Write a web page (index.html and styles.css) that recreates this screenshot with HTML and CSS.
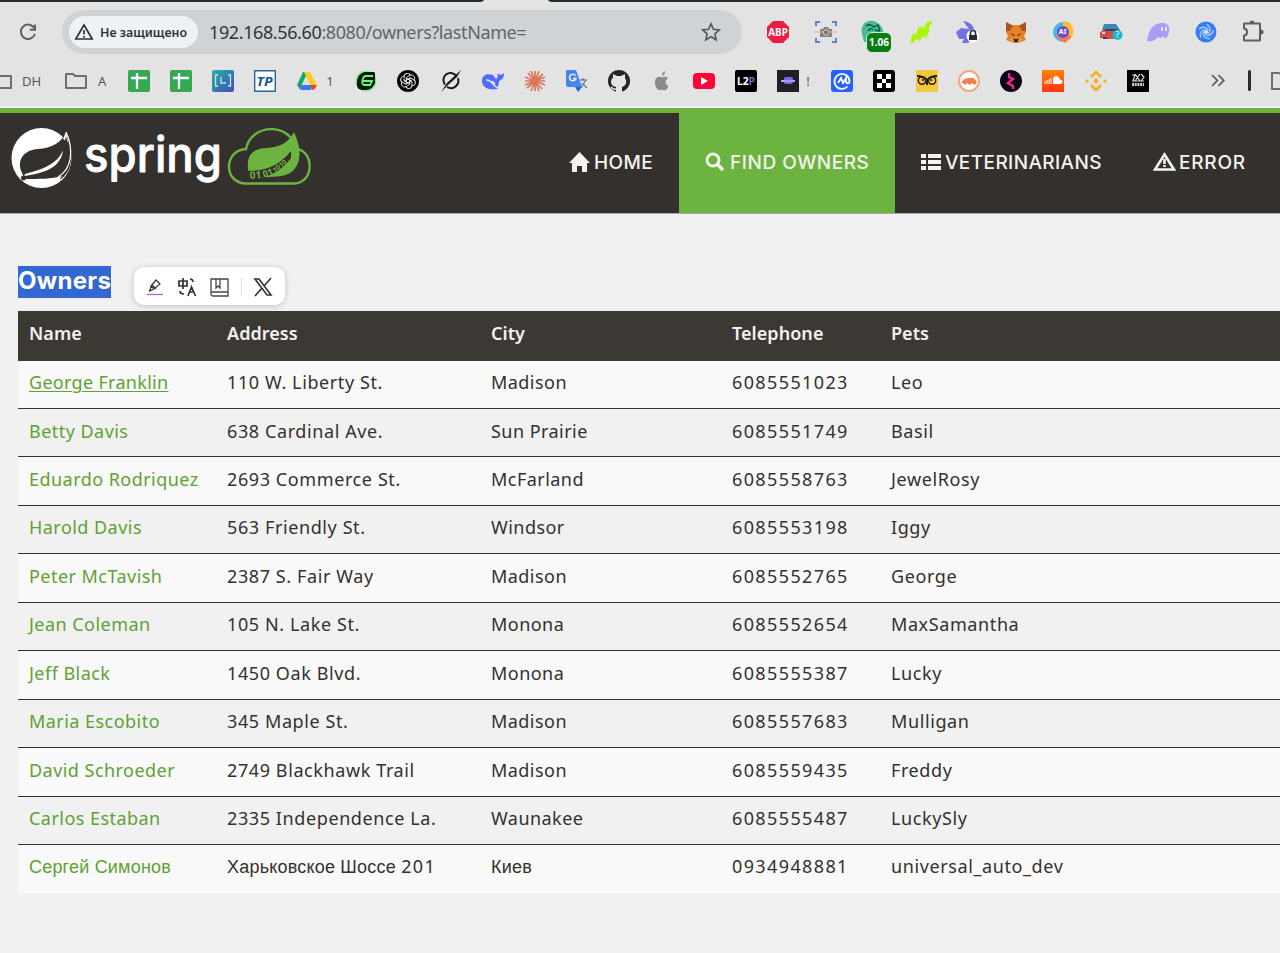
FILE: index.html
```html
<!DOCTYPE html>
<html lang="en">
<head>
<meta charset="utf-8">
<title>Owners</title>
<link rel="stylesheet" href="styles.css">
</head>
<body>
<header class="browser">
  <div class="tabstrip"><span class="tab-left"></span><span class="tab-right"></span></div>
  <div class="toolbar">
    <svg class="reload" viewBox="0 0 20 20"><path d="M16.4 6.2A7.2 7.2 0 1 0 17 12M17 2.5v5.2h-5.2" fill="none" stroke="#606264" stroke-width="2"/></svg>
    <div class="omnibox">
      <div class="security">
        <svg width="20" height="18" viewBox="0 0 20 18"><path d="M10 2 1.8 16h16.4z" fill="none" stroke="#303438" stroke-width="1.7"/><path d="M10 7v4.5M10 13v1.7" stroke="#303438" stroke-width="1.7"/></svg>
        <span>Не защищено</span>
      </div>
      <div class="url">192.168.56.60<span>:8080/owners?lastName=</span></div>
      <svg class="star" viewBox="0 0 20 20"><path d="m10 1.8 2.4 5.5 6 .6-4.5 4 1.3 5.900-5.200-3.100-5.200 3.100 1.300-5.900-4.500-4 6-.6z" fill="none" stroke="#54575a" stroke-width="1.6"/></svg>
    </div>
    <div class="extensions">
      <svg viewBox="0 0 24 24"><path d="M7 1h10l6 6v10l-6 6H7l-6-6V7z" fill="#ed1c43"/><text x="2.2" y="16.2" font-size="11" font-weight="700" textLength="19.6" lengthAdjust="spacingAndGlyphs" fill="#fff">ABP</text></svg>
      <svg viewBox="0 0 24 24"><path d="M2 6V2h4M18 2h4v4M22 18v4h-4M6 22H2v-4" fill="none" stroke="#5d84cf" stroke-width="2"/><path d="M6 9h3l1-2h4l1 2h3v8H6z" fill="#85827f"/><path d="M1 12h22" stroke="#e8b09f"/><circle cx="12" cy="12.500" r="2.700" fill="#777" stroke="#ccc"/></svg>
      <div class="badged"><svg viewBox="0 0 24 24"><path d="M1 14C-1 5 5 0 12 1c6 1 10 6 11 14l-7 7H3z" fill="#43bd8f"/><path d="M5 6q4-3 8 1l4-2 2 5M7 11q3-4 5-1M14 10l5 1" fill="none" stroke="#174b40" stroke-width="1.300"/></svg><span class="badge">1.06</span></div>
      <svg viewBox="0 0 24 24"><path d="m1 23 2-8 3-2 1 2 2-7 4-2 1 3 4-7 4-1 1 2-3 4v5l-3 6-3-2-3 5-4-2-3 4z" fill="#a9f50b"/></svg>
      <svg viewBox="0 0 24 24"><path d="M7 1c7 1 10 4 11 8l4 5-7 6-3 3-6 0 2-4H3l-3-7 5-4 8 1z" fill="#7470e5"/><circle cx="17" cy="16" r="6.500" fill="#fff"/><path d="M13 15h8v5h-8z" fill="#262b35"/><path d="M14.500 15v-2a2.500 2.500 0 0 1 5 0v2" fill="none" stroke="#262b35" stroke-width="1.600"/></svg>
      <svg viewBox="0 0 24 24"><path d="m2 2 6 3h8l6-3v10l-2 4 2 4-5 2-3 1h-4l-3-1-5-2 2-4-2-4z" fill="#e88120"/><path d="m2 2 7 4-3 5H2zm20 0-7 4 3 5h4z" fill="#a75227"/><path d="m6 13 5 2-1 1zm12 0-5 2 1 1zM9 19h6l-1 3h-4z" fill="#38261d"/><path d="m6 18 4 2-1 2zm12 0-4 2 1 2z" fill="#d3beac"/></svg>
      <svg viewBox="0 0 24 24"><circle cx="12" cy="12" r="10" fill="#43b8ee"/><path d="M12 1c10-1 13 12 8 17l-5 5-3-8z" fill="#ffbd31"/><path d="M5 17 13 8l7 9-6 6z" fill="#ff7850"/><circle cx="12" cy="12" r="6" fill="#7247c7"/><text x="7.8" y="14.400" font-size="7" font-weight="700" fill="#fff">AI</text></svg>
      <svg viewBox="0 0 24 24"><path d="m3 11 2-2h14l3 3v7H4v-1H1v-6z" fill="#d44d49"/><path d="m3 10 2-6h12l4 6z" fill="#358ab9"/><path d="M6 10h13M4 18h4" stroke="#3c4058" stroke-width="2"/><path d="M3 13h3" stroke="#ffd4bd" stroke-width="2"/><circle cx="18.500" cy="15" r="5" fill="#16b9c9"/><text x="16.600" y="18" font-size="8" fill="#fff">?</text></svg>
      <svg viewBox="0 0 24 24"><path d="M1 21C3 8 9 2 17 3c8 1 7 9 4 14-2 2-3 1-4-1-2 3-4 3-5 0-2 4-5 6-11 5z" fill="#ab9df1"/><path d="M16 7v4M20 7v4" stroke="#e8e4ff" stroke-width="2"/></svg>
      <svg viewBox="0 0 24 24"><circle cx="12" cy="12" r="10.500" fill="#3a7df1"/><g fill="none" stroke="#a9ceff" stroke-width="1.300"><path id="swirl" d="M14 11c0-4-6-5-9-2"/><use href="#swirl" transform="rotate(72 12 12)"/><use href="#swirl" transform="rotate(144 12 12)"/><use href="#swirl" transform="rotate(216 12 12)"/><use href="#swirl" transform="rotate(288 12 12)"/></g><circle cx="12" cy="12" r="2" fill="#d7e8ff"/></svg>
      <svg class="puzzle" viewBox="0 0 24 24"><path d="M3 3.500h16V20.500H3v-5c4 0 4-7 0-7z" fill="none" stroke="#5d5f61" stroke-width="2" stroke-linejoin="round"/><path d="M8.500 3a2.500 2.500 0 0 1 5 0zM20 9.500a2.500 2.500 0 0 1 0 5z" fill="#5d5f61"/></svg>
    </div>
  </div>
  <nav class="bookmarks">
    <svg class="folder-cut" viewBox="0 0 24 24"><path d="M1 5h8l2 2h12v12H1z" fill="none" stroke="#6c6e70" stroke-width="2" stroke-linejoin="round"/></svg><span class="dh">DH</span>
    <svg class="folder" viewBox="0 0 24 24"><path d="M2 5h7l2 2h11v12H2z" fill="none" stroke="#6c6e70" stroke-width="2" stroke-linejoin="round"/></svg><span class="a">A</span>
    <div class="group first">
      <svg viewBox="0 0 24 24"><rect x="1" y="1" width="22" height="22" rx="2" fill="#34a853"/><path d="M4 9h16M10 4v16" stroke="#fff" stroke-width="2.300"/></svg>
      <svg viewBox="0 0 24 24"><rect x="1" y="1" width="22" height="22" rx="2" fill="#34a853"/><path d="M4 9h16M10 4v16" stroke="#fff" stroke-width="2.300"/></svg>
      <svg viewBox="0 0 24 24"><defs><linearGradient id="lms" x2="1" y2="1"><stop stop-color="#27b3a4"/><stop offset="1" stop-color="#4849ba"/></linearGradient></defs><rect x="1" y="1" width="22" height="22" rx="2" fill="url(#lms)"/><path d="M7 6H4.500v11H7M17 6h2.500v11H17M10 8v6h5" fill="none" stroke="#b9e6f0" stroke-width="1.300"/></svg>
      <svg viewBox="0 0 24 24"><path d="M1.700 1.700h20.600v20.600H1.700z" fill="#fff" stroke="#2d6498" stroke-width="1.400"/><text x="3.500" y="16.500" font-size="13" font-weight="700" font-style="italic" textLength="16" lengthAdjust="spacingAndGlyphs" fill="#145896">TP</text></svg>
      <svg viewBox="0 0 24 24"><path d="M8 3h5l-4 8-4 9-3-4z" fill="#16a765"/><path d="M9 3h6l7 13h-7z" fill="#ffc928"/><path d="M5 16h13l-2 5H7q-2 0-3-2z" fill="#3d77ee"/><path d="M16 16h6q-2 5-5 5z" fill="#ea4435"/></svg>
    </div>
    <span class="one">1</span>
    <div class="group second">
      <svg viewBox="0 0 24 24"><circle cx="12" cy="12" r="10.500" fill="#7bf48d"/><path d="M20 3H11C5 4 2 10 3 17c1 4 4 4 9 4 5 0 7-3 9-7V4z" fill="#081a0d"/><path d="M19 7h-7c-4 0-5 9-2 9h6l2-4H9" fill="none" stroke="#69f779" stroke-width="1.800"/></svg>
      <svg viewBox="0 0 24 24"><circle cx="12" cy="12" r="11" fill="#050505"/><g fill="none" stroke="#eee" stroke-width=".9"><path id="petal" d="M10.300 15V8.500L14 6.300c3-1.500 6 2 4 5"/><use href="#petal" transform="rotate(60 12 12)"/><use href="#petal" transform="rotate(120 12 12)"/><use href="#petal" transform="rotate(180 12 12)"/><use href="#petal" transform="rotate(240 12 12)"/><use href="#petal" transform="rotate(300 12 12)"/></g></svg>
      <svg viewBox="0 0 24 24"><path d="M17 6.500a7 7 0 0 0-11 9M8 18c7 4 13-3 11-9" fill="none" stroke="#17191a" stroke-width="2"/><path d="M2 23 8 14 22 1l-4 7-9 8z" fill="#17191a"/></svg>
      <svg viewBox="0 0 24 24"><path d="M1 12c0-6 5-8 11-6l3 4c2-1 2-5 1-7 1 3 4 4 7 1 0 5-2 7-5 8 0 4-2 6-1 8-4 0-5 1-9 0-4-1-7-4-7-8z" fill="#536bfa"/><path d="M5 11c6-1 7 7 12 8M11 12l3 3" stroke="#e2e3e3" stroke-width="1.500" fill="none"/></svg>
      <svg viewBox="0 0 24 24"><path d="M12 2v20M2 12h20M5 4l14 16M20 5 4 19M8 2l8 20M16 2 8 22M2 8l20 8M2 16l20-8" stroke="#d97757" stroke-width="1.700"/></svg>
      <svg viewBox="0 0 24 24"><path d="M2 1h9l6 17H3q-2 0-2-2V2z" fill="#4485ee"/><path d="M10 18h7l-4 5z" fill="#2766d6"/><path d="M10.500 6.500a3.300 3.300 0 1 0 .5 3H8" fill="none" stroke="#e8f0ff" stroke-width="1.500"/><path d="M15 11h7M18 9v2M21 11l-5 8M17 14l5 5" fill="none" stroke="#718292" stroke-width="1.300"/></svg>
      <svg viewBox="0 0 24 24"><circle cx="12" cy="12" r="11" fill="#22272b"/><path d="M9 23v-5C2 17 4 9 6 9L6 5l4 2h4l4-2v4c3 5 0 8-3 9v5z" fill="#e4e4e4"/><path d="M9 20c-3 1-3-1-5-2" fill="none" stroke="#e4e4e4" stroke-width="1.500"/></svg>
      <svg viewBox="0 0 24 24"><path d="M18.500 17c-2 5-4 5-6.500 3.500-4 2.500-7-2.500-7-7 0-5.500 4-6.500 7-5 3-1.500 5-1 6 1-3.500 2-3 6 .5 7.500zM12 7c0-3 1-4 3-5 0 3-1 4-3 5z" fill="#8a8b8c"/></svg>
      <svg viewBox="0 0 24 24"><rect x="1" y="4" width="22" height="16" rx="4" fill="#ff0338"/><path d="m9 8 7 4-7 4z" fill="#fff"/></svg>
      <svg viewBox="0 0 24 24"><rect x="1" y="1" width="22" height="22" rx="2"/><text x="3" y="15.500" font-size="10" font-weight="700" textLength="18" lengthAdjust="spacingAndGlyphs" fill="#fff">L2<tspan fill="#7861c8">P</tspan></text></svg>
      <svg viewBox="0 0 24 24"><path d="M1 1h22v22H1z" fill="#202024"/><path d="M5 11h14v2H5z" fill="#b3a7ee"/><rect x="8" y="8" width="9" height="7" rx="2" fill="#8065ee"/><path d="M7 12h10" stroke="#cfc7f5"/></svg>
    </div>
    <span class="bang">!</span>
    <div class="group third">
      <svg viewBox="0 0 24 24"><rect x="1" y="1" width="22" height="22" rx="3" fill="#2860ff"/><path d="M17.500 17.500a7.500 7.500 0 1 1 2-5.500c0 3-3.500 3-3.500 0V9l-3 5-2-5-3 5" fill="none" stroke="#fff" stroke-width="1.800"/></svg>
      <svg viewBox="0 0 24 24"><rect x="1" y="1" width="22" height="22" rx="3"/><path d="M5 5h5v5H5zm9 0h5v5h-5zm-4 5h4v4h-4zm-5 4h5v5H5zm9 0h5v5h-5z" fill="#fff"/></svg>
      <svg viewBox="0 0 24 24"><path d="M1 1h22v22H1z" fill="#f3c83d"/><path d="M2 7c4 0 7 1 10 4 3-3 6-4 10-4M12 11v5" stroke="#242116" stroke-width="2" fill="none"/><circle cx="7" cy="11.500" r="3.700" fill="none" stroke="#242116" stroke-width="1.500"/><circle cx="17" cy="11.500" r="3.700" fill="none" stroke="#242116" stroke-width="1.500"/><circle cx="8" cy="11" r="1"/><circle cx="16" cy="11" r="1"/></svg>
      <svg viewBox="0 0 24 24"><circle cx="12" cy="12" r="10" fill="#fff" stroke="#f2a77d" stroke-width="2"/><path d="M4 14c2-3 4-5 9-5 3-1 5 1 7 4l-2 3-3-2-2 2-3-2-2 2-2-2z" fill="#ef814a"/></svg>
      <svg viewBox="0 0 24 24"><circle cx="12" cy="12" r="11" fill="#060314"/><path d="M10 4v4l4 2-5 4 5 3v3" fill="none" stroke="#f2278b" stroke-width="2.400"/></svg>
      <svg viewBox="0 0 24 24"><defs><linearGradient id="cloud-orange" x2="0" y2="1"><stop stop-color="#ff8500"/><stop offset="1" stop-color="#ff3516"/></linearGradient></defs><path d="M1 1h22v22H1z" fill="url(#cloud-orange)"/><path d="M12 15V9c3-4 7-1 7 2 3-1 4 4 0 4z" fill="#fff"/><path d="M4 12v3M6 11v4M8 10v5M10 9v6" stroke="#fff"/></svg>
      <svg viewBox="0 0 24 24"><path d="m12 1 6 6-2 2-4-4-4 4-2-2zM6 17l2-2 4 4 4-4 2 2-6 6zM1 12l2-2 2 2-2 2zM12 9l3 3-3 3-3-3zM19 12l2-2 2 2-2 2z" fill="#f1ae2f"/></svg>
      <svg viewBox="0 0 24 24"><path d="M1 1h22v22H1z"/><path d="M6 6h3l-2 6M9 5l5 7M14 5l-5 7M15 5l3 3-3 4M6 12h12" fill="none" stroke="#ddd" stroke-width="1.200"/><path d="M6 15.500h12" stroke="#ccc" stroke-width="3" stroke-dasharray="2 .7"/></svg>
    </div>
    <svg class="more" viewBox="0 0 16 16"><path d="m2 3 5 5-5 5M8 3l5 5-5 5" fill="none" stroke="#5f6368" stroke-width="1.700"/></svg>
    <span class="divider"></span>
    <svg class="last-folder" viewBox="0 0 24 24"><path d="M2 4h7l4 3h9v13H2z" fill="none" stroke="#6c6e70" stroke-width="2" stroke-linejoin="round"/></svg>
  </nav>
</header>

<nav class="navbar">
  <svg class="logo" viewBox="0 0 320 80" width="320" height="80">
    <circle cx="41.500" cy="37" r="30" fill="#fff"/>
    <path d="M66 11C61 22 52 27 38 28 24 29 16 39 22 52c2 5 4 7 8 6h31C75 48 73 27 66 11z" fill="#34302d"/>
    <path d="M24 55C46 52 61 46 63 29 58 41 48 47 25 53zM26 58c13 0 26 0 36-3-7 11-22 13-36 3z" fill="#fff"/>
    <path d="M66 11C74 29 72 48 58 56" fill="none" stroke="#fff" stroke-width="1.300"/>
    <path d="M66 11 63 18 68 21z" fill="#fff"/><path d="m66 15-1 5 3 4z" fill="#34302d"/><circle cx="23.500" cy="57" r="2.500" fill="#34302d"/>
    <text x="84" y="51" class="wordmark" textLength="138" lengthAdjust="spacingAndGlyphs">spring</text>
    <path d="M245 62.500C223 61 224 29 246 28 251 2 291 1 296 28 314 29 315 62 294 62.500z" fill="none" stroke="#6db33f" stroke-width="2.400"/>
    <path d="M294 11C303 30 301 47 288 53 279 57 266 55 250 58 244 35 251 28 266 27 281 26 289 21 294 11z" fill="#6db33f"/>
    <path d="M248 50C269 50 280 43 291 30v7C281 51 268 57 248 59z" fill="#34302d"/>
    <text x="250" y="58" font-size="10" font-weight="700" fill="#6db33f" transform="rotate(-4 250 58)">01</text><text x="264" y="56.500" font-size="9" font-weight="700" fill="#6db33f" transform="rotate(-20 264 56.500)">01</text><text x="275" y="52" font-size="7" font-weight="700" fill="#6db33f" transform="rotate(-39 275 52)">1010</text>
  </svg>
  <div class="menu">
    <a class="home"><svg width="21" height="20" viewBox="0 0 21 20"><path d="M10.500 0 21 11h-3v9h-5v-6H8v6H3v-9H0z"/></svg><span>HOME</span></a>
    <a class="find"><svg width="20" height="20" viewBox="0 0 20 20"><circle cx="8" cy="8" r="6" fill="none" stroke="#f4f4ef" stroke-width="3"/><path d="m12 12 6 6" stroke="#f4f4ef" stroke-width="3.500"/></svg><span>FIND OWNERS</span></a>
    <a class="vets"><svg width="20" height="18" viewBox="0 0 20 18"><path d="M0 1h5v4H0zm7 0h13v4H7zM0 7h5v4H0zm7 0h13v4H7zM0 13h5v4H0zm7 0h13v4H7z"/></svg><span>VETERINARIANS</span></a>
    <a class="error"><svg width="23" height="20" viewBox="0 0 23 20"><path d="M11.500 2.500 2 17.500h19z" fill="none" stroke="#f4f4ef" stroke-width="2.600"/><path d="M10.200 7h2.600v5h-2.600zm0 6h2.600v2h-2.600z"/></svg><span>ERROR</span></a>
  </div>
</nav>

<main class="content">
  <div class="heading">
    <h2>Owners</h2>
    <div class="popup">
      <svg class="marker" width="18" height="18" viewBox="0 0 18 18"><path d="m5 8 5-6 4 4-6 5zM5 8l-1 5 4-2M3 13l2-2M6 7l4 4" fill="none" stroke="#34363a" stroke-width="1.200"/><path d="M1 16.500h16" stroke="#b65ce5" stroke-width="1.300"/></svg>
      <svg class="translate" width="20" height="20" viewBox="0 0 20 20"><path d="M2 4h8v5H2zM6 1v11M13 2q3 0 3 3M3 14q0 3 4 3M11 19l3.500-9 4 9M12.500 15h5" fill="none" stroke="#333" stroke-width="1.700"/></svg>
      <svg class="book" width="19" height="19" viewBox="0 0 19 19"><path d="M1 1h17v17H3q-2 0-2-2zM1 14h17M6 1v9l2-2 2 2V1" fill="none" stroke="#45464a" stroke-width="1.300"/></svg>
      <i></i>
      <svg class="x" width="20" height="20" viewBox="0 0 20 20"><path d="M2 2h4l12 16h-4zM18 1 11 9M2 19l7-8" fill="none" stroke="#303236" stroke-width="1.600"/></svg>
    </div>
  </div>
  <table class="owners">
    <thead><tr><th>Name</th><th>Address</th><th>City</th><th>Telephone</th><th>Pets</th></tr></thead>
    <tbody>
      <tr><td><a class="hovered">George Franklin</a></td><td>110 W. Liberty St.</td><td>Madison</td><td>6085551023</td><td>Leo</td></tr>
      <tr><td><a>Betty Davis</a></td><td>638 Cardinal Ave.</td><td>Sun Prairie</td><td>6085551749</td><td>Basil</td></tr>
      <tr><td><a>Eduardo Rodriquez</a></td><td>2693 Commerce St.</td><td>McFarland</td><td>6085558763</td><td>JewelRosy</td></tr>
      <tr><td><a>Harold Davis</a></td><td>563 Friendly St.</td><td>Windsor</td><td>6085553198</td><td>Iggy</td></tr>
      <tr><td><a>Peter McTavish</a></td><td>2387 S. Fair Way</td><td>Madison</td><td>6085552765</td><td>George</td></tr>
      <tr><td><a>Jean Coleman</a></td><td>105 N. Lake St.</td><td>Monona</td><td>6085552654</td><td>MaxSamantha</td></tr>
      <tr><td><a>Jeff Black</a></td><td>1450 Oak Blvd.</td><td>Monona</td><td>6085555387</td><td>Lucky</td></tr>
      <tr><td><a>Maria Escobito</a></td><td>345 Maple St.</td><td>Madison</td><td>6085557683</td><td>Mulligan</td></tr>
      <tr><td><a>David Schroeder</a></td><td>2749 Blackhawk Trail</td><td>Madison</td><td>6085559435</td><td>Freddy</td></tr>
      <tr><td><a>Carlos Estaban</a></td><td>2335 Independence La.</td><td>Waunakee</td><td>6085555487</td><td>LuckySly</td></tr>
      <tr><td><a class="cyr">Сергей Симонов</a></td><td><span class="cyr">Харьковское Шоссе</span> <span class="digits">201</span></td><td><span class="cyr">Киев</span></td><td>0934948881</td><td>universal_auto_dev</td></tr>
    </tbody>
  </table>
</main>
</body>
</html>
```
FILE: styles.css
```css
* { box-sizing: border-box; }
body { margin: 0; background: #f1f1f1; font-family: "Noto Sans", "Open Sans", sans-serif; color: #34302d; overflow: hidden; }
svg { display: block; flex: none; }

.browser { height: 108px; background: #e3e3e3; border-bottom: 2px solid #f2f4f3; }
.tabstrip { height: 2px; display: flex; justify-content: space-between; }
.tab-left { width: 484px; background: #222c2d; border-bottom-right-radius: 6px 2px; }
.tab-right { width: 732px; background: #222c2d; border-bottom-left-radius: 6px 2px; }
.toolbar { height: 60px; display: flex; align-items: center; padding-left: 18px; }
.reload { width: 20px; height: 20px; }
.omnibox { width: 680px; height: 44px; margin-left: 24px; border-radius: 22px; background: #d0d3d6; display: flex; align-items: center; padding-left: 7px; }
.security { width: 129px; height: 32px; border-radius: 16px; background: #eff2f5; display: flex; align-items: center; padding-left: 5px; gap: 6px; font: 600 12.4px "Noto Sans", sans-serif; white-space: nowrap; color: #303438; }
.url { width: 492px; margin-left: 11px; font-size: 18px; letter-spacing: -.39px; color: #303438; white-space: nowrap; }
.url span { color: #606569; }
.star { width: 20px; height: 20px; }
.extensions { display: flex; align-items: center; gap: 23.5px; margin-left: 24px; }
.extensions svg { width: 24px; height: 24px; }
.badged { position: relative; width: 24px; height: 24px; }
.badge { position: absolute; left: 5px; top: 12px; width: 26px; height: 21px; border: 1px solid #d6eadb; border-radius: 6px; background: #087d12; color: #fff; font: 700 10px/19px "Noto Sans", sans-serif; text-align: center; }

.bookmarks { height: 36px; display: flex; align-items: center; font-size: 13px; color: #55585a; overflow: hidden; padding-top: 1px; }
.bookmarks > span { flex: none; }
.folder-cut { width: 24px; height: 24px; margin-left: -12px; }
.dh { width: 22px; margin-left: 10px; }
.folder { width: 24px; height: 24px; margin-left: 20px; }
.a { width: 9px; margin-left: 10px; }
.group { display: flex; flex: none; }
.group svg { width: 24px; height: 24px; }
.first { gap: 18.2px; margin-left: 19.500px; }
.one { width: 8px; margin-left: 7px; }
.second { gap: 18.2px; margin-left: 20px; }
.bang { width: 5px; margin-left: 6px; }
.third { gap: 18.25px; margin-left: 19px; }
.more { width: 17px; height: 17px; margin-left: 60px; }
.divider { width: 3px; height: 21px; margin-left: 21px; border-radius: 2px; background: #292b2f; }
.last-folder { width: 24px; height: 24px; margin-left: 19px; }

.navbar { height: 106px; border-top: 5px solid #6db33f; border-bottom: 1px solid #aaa7a5; background: #34302d; display: flex; justify-content: space-between; }
.logo { margin-top: 8px; }
.wordmark { font: 500 49px "Inter", sans-serif; fill: #fff; stroke: #fff; stroke-width: .8px; stroke-linejoin: round; }
.menu { display: flex; font: 500 19px "Inter", sans-serif; color: #f4f4ef; }
.menu a { display: flex; align-items: center; white-space: nowrap; height: 100px; padding-bottom: 2px; }
.menu svg { fill: #f4f4ef; }
.home { width: 110px; gap: 4px; letter-spacing: .4px; }
.find { width: 216px; padding-left: 26px; gap: 5px; background: #6db33f; letter-spacing: .55px; }
.vets { width: 232px; padding-left: 26px; gap: 4px; letter-spacing: .4px; }
.error { width: 153px; padding-left: 26px; gap: 3px; letter-spacing: .8px; }

.content { padding: 52px 0 0 18px; }
.heading { height: 45px; display: flex; align-items: flex-start; }
h2 { margin: 0; width: 93px; height: 32px; background: #3367d1; color: #fff; font: 700 24px/30px "Inter", sans-serif; letter-spacing: .3px; white-space: nowrap; }
.popup { margin: 1px 0 0 23px; width: 151px; height: 38px; border-radius: 10px; background: #fff; box-shadow: 0 1px 6px #0003; display: flex; align-items: center; padding: 2px 0 0 12px; }
.translate { margin-left: 13px; }
.book { margin-left: 13px; }
.popup i { width: 1px; height: 18px; background: #ddd; margin: 0 11px 0 12px; }
.owners { display: block; width: 1262px; font-size: 18px; line-height: 24px; }
.owners thead, .owners tbody { display: block; }
.owners tr { display: grid; grid-template-columns: 198px 264px 241px 159px 1fr; height: 48.45px; background: #f9f9f9; border-bottom: 1px solid #34302d; }
.owners tbody tr:nth-child(even) { background: #f1f1f1; }
.owners tbody tr:last-child { border-bottom: 0; }
.owners thead tr { height: 49.6px; background: #3c3833; border: 0; color: #f1f1f1; }
.owners th, .owners td { padding: 10px 0 0 11px; text-align: left; white-space: nowrap; }
.owners td { padding-top: 9.5px; letter-spacing: .46px; }
.owners th { font-weight: 600; letter-spacing: .05px; }
.owners td:nth-child(2) { letter-spacing: .6px; }
.owners td:nth-child(4) { letter-spacing: 1.38px; }
.owners td:nth-child(5) { letter-spacing: .6px; }
.owners a { color: #5fa134; }
.owners .hovered { letter-spacing: .3px; text-decoration: underline; text-decoration-thickness: 1px; text-underline-offset: 2px; }
.owners .cyr { font-family: "Liberation Sans", sans-serif; letter-spacing: .2px; }
.owners .digits { letter-spacing: 1.38px; }
```
